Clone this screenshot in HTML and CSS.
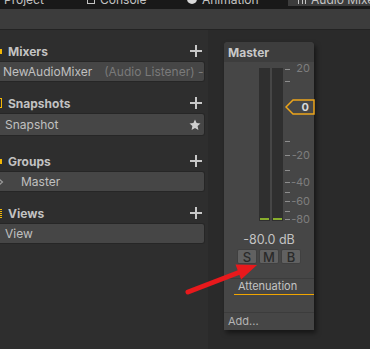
FILE: index.html
```html
<!DOCTYPE html>
<html lang="en">
<head>
    <meta charset="utf-8">
    <title>Audio Mixer</title>
    <link rel="stylesheet" href="styles.css">
</head>
<body>
    <div class="tabs">
        <div class="tab tab-first"><span class="tab-icon folder"></span>Project</div>
        <div class="tab tab-console"><span class="tab-icon box"></span>Console</div>
        <div class="tab tab-anim"><span class="tab-icon dot"></span>Animation</div>
        <div class="tab active"><span class="tab-icon bars-icon"></span>Audio Mixer</div>
    </div>
    <div class="toolbar"></div>

    <div class="main">
        <div class="sidebar">
            <div class="section">
                <div class="section-head">
                    <span class="marker marker-dot"></span>
                    <span class="title">Mixers</span>
                    <svg class="plus" viewBox="0 0 12 12"><path d="M6 0v12M0 6h12"/></svg>
                </div>
                <div class="row row-mixer">NewAudioMixer<span class="muted">(Audio Listener) -</span></div>
            </div>
            <div class="section section-snap">
                <div class="section-head">
                    <span class="marker marker-bracket"></span>
                    <span class="title">Snapshots</span>
                    <svg class="plus" viewBox="0 0 12 12"><path d="M6 0v12M0 6h12"/></svg>
                </div>
                <div class="row row-snap">Snapshot
                    <svg class="star" viewBox="0 0 12 12"><path d="M6 0.5l1.6 3.6 3.9 0.4-2.9 2.6 0.8 3.9L6 9 2.6 11l0.8-3.9L0.5 4.5l3.9-0.4z"/></svg>
                </div>
            </div>
            <div class="section">
                <div class="section-head">
                    <span class="marker marker-dot"></span>
                    <span class="title">Groups</span>
                    <svg class="plus" viewBox="0 0 12 12"><path d="M6 0v12M0 6h12"/></svg>
                </div>
                <div class="row row-group">
                    <svg class="chevron" viewBox="0 0 8 8"><path d="M2 1l3.5 3L2 7"/></svg>
                    <span>Master</span>
                </div>
            </div>
            <div class="section">
                <div class="section-head">
                    <span class="marker marker-dash"></span>
                    <span class="title">Views</span>
                    <svg class="plus" viewBox="0 0 12 12"><path d="M6 0v12M0 6h12"/></svg>
                </div>
                <div class="row row-view">View</div>
            </div>
        </div>

        <div class="mixer-area">
            <div class="strip">
                <div class="strip-head">Master</div>
                <div class="meter">
                    <div class="bar"><div class="level"></div></div>
                    <div class="bar"><div class="level"></div></div>
                    <div class="scale">
                        <span class="tick" style="top: 1px"></span>
                        <span class="tick" style="top: 13px"></span>
                        <span class="tick" style="top: 73px"></span>
                        <span class="tick" style="top: 87px"></span>
                        <span class="tick" style="top: 102px"></span>
                        <span class="tick" style="top: 114px"></span>
                        <span class="tick" style="top: 124px"></span>
                        <span class="tick" style="top: 133px"></span>
                        <span class="tick" style="top: 143px"></span>
                        <span class="tick" style="top: 151px"></span>
                        <span class="label" style="top: 0px">20</span>
                        <span class="label" style="top: 87px">-20</span>
                        <span class="label" style="top: 114px">-40</span>
                        <span class="label" style="top: 133px">-60</span>
                        <span class="label" style="top: 151px">-80</span>
                        <div class="pointer">
                            <svg viewBox="0 0 30 16"><path d="M1 8L8 1H29V15H8Z"/></svg>
                            <span>0</span>
                        </div>
                    </div>
                </div>
                <div class="db">-80.0 dB</div>
                <div class="buttons">
                    <div class="btn-sm">S</div>
                    <div class="btn-sm">M</div>
                    <div class="btn-sm">B</div>
                </div>
                <div class="effects">
                    <div class="effect">Attenuation</div>
                </div>
                <div class="spacer"></div>
                <div class="add">Add...</div>
            </div>
        </div>
    </div>

    <svg class="arrow" viewBox="0 0 370 349">
        <path class="arrow-line" d="M188 292L240 272"/>
        <path class="arrow-head" d="M257 265L235.5 264.6L241.1 279.6Z"/>
    </svg>
</body>
</html>
```

FILE: styles.css
```css
body {
    margin: 0;
    width: 370px;
    height: 349px;
    overflow: hidden;
    background-color: #2a2a2a;
    font-family: Inter, "Noto Sans", sans-serif;
    color: #c4c4c4;
    position: relative;
}

/* window tabs, mostly cut off at the top */
.tabs {
    height: 9px;
    background-color: #191919;
    display: flex;
    overflow: hidden;
}
.tab {
    flex: none;
    display: flex;
    align-items: center;
    gap: 5px;
    padding-left: 10px;
    height: 14px;
    margin-top: -8px;
    font-size: 12px;
    white-space: nowrap;
    box-sizing: border-box;
}
.tab-first {
    width: 96px;
    margin-left: -19px;
}
.tab-console {
    width: 100px;
}
.tab-anim {
    width: 111px;
}
.tab.active {
    flex: 1;
    background-color: #3c3c3c;
}
.tab-icon {
    width: 8px;
    height: 9px;
    flex: none;
    box-sizing: border-box;
}
.folder {
    background-color: #c4c4c4;
}
.box {
    border: 1.5px solid #c4c4c4;
}
.dot {
    border-radius: 50%;
    background-color: #d8d8d8;
    width: 10px;
    height: 10px;
}
.bars-icon {
    border-left: 1px solid #c4c4c4;
    border-right: 1px solid #c4c4c4;
    background: linear-gradient(#c4c4c4, #c4c4c4) center / 1px 100% no-repeat;
}

.toolbar {
    height: 20px;
    background-color: #3c3c3c;
    border-bottom: 1px solid #232323;
}

.main {
    display: flex;
    height: 319px;
}

/* left column */
.sidebar {
    width: 208px;
    padding: 11px 3px 0 0;
    box-sizing: border-box;
    background-color: #2e2e2e;
}
.section {
    margin-bottom: 11px;
}
.section-snap {
    margin-bottom: 15px;
}
.section-head {
    height: 20px;
    display: flex;
    align-items: center;
}
.marker {
    width: 2px;
    flex: none;
    box-sizing: border-box;
}
.marker-dot {
    height: 5px;
    background-color: #f2b705;
}
.marker-bracket {
    height: 10px;
    border: 1.5px solid #f2b705;
    border-left: none;
}
.marker-dash {
    height: 9px;
    background: repeating-linear-gradient(#f2b705 0 1px, transparent 1px 2px);
}
.title {
    margin-left: 6px;
    font-size: 12px;
    font-weight: bold;
    color: #c2c2c2;
}
.plus {
    margin-left: auto;
    margin-right: 3px;
    width: 12px;
    height: 12px;
    stroke: #c8c8c8;
    stroke-width: 2;
}
.row {
    height: 21px;
    box-sizing: border-box;
    display: flex;
    align-items: center;
    background-color: #464646;
    border: 1px solid #262626;
    border-left: none;
    border-radius: 0 3px 3px 0;
    font-size: 12px;
    color: #c0c0c0;
    white-space: nowrap;
    overflow: hidden;
}
.row-mixer {
    padding-left: 3px;
}
.muted {
    margin-left: 12px;
    color: #7a7a7a;
}
.row-snap {
    height: 23px;
    padding-left: 5px;
}
.star {
    margin-left: auto;
    margin-right: 3px;
    width: 12px;
    height: 12px;
    fill: #cfcfcf;
}
.row-group span {
    margin-left: 16px;
}
.chevron {
    width: 8px;
    height: 8px;
    margin-left: -3px;
    fill: none;
    stroke: #9a9a9a;
    stroke-width: 1.2;
}
.row-view {
    padding-left: 5px;
}

/* mixer strips */
.mixer-area {
    flex: 1;
    padding: 12px 0 0 16px;
}
.strip {
    width: 90px;
    height: 288px;
    background-color: #464646;
    border-radius: 4px 4px 0 0;
    box-shadow: 2px 3px 5px rgba(0, 0, 0, 0.5);
    display: flex;
    flex-direction: column;
}
.strip-head {
    height: 20px;
    flex: none;
    display: flex;
    align-items: center;
    padding-left: 4px;
    background-color: #3d3d3d;
    border-radius: 4px 4px 0 0;
    font-size: 12px;
    font-weight: bold;
    color: #c8c8c8;
}
.meter {
    display: flex;
    height: 153px;
    margin-top: 6px;
    padding-left: 35px;
}
.bar {
    width: 11px;
    background-color: #2f2f2f;
    display: flex;
    flex-direction: column;
    justify-content: flex-end;
    padding: 0 1px 1px;
    box-sizing: border-box;
}
.bar + .bar {
    margin-left: 2px;
}
.level {
    height: 2px;
    background-color: #88ad2c;
}
.scale {
    position: relative;
    flex: 1;
    margin-left: 2px;
}
.tick {
    position: absolute;
    left: 0;
    width: 5px;
    height: 1px;
    background-color: #8e8e8e;
}
.label {
    position: absolute;
    right: 4px;
    transform: translateY(-50%);
    font-size: 11px;
    color: #7e7e7e;
}
.pointer {
    position: absolute;
    left: 0;
    top: 31px;
    width: 30px;
    height: 16px;
}
.pointer svg {
    width: 30px;
    height: 16px;
    fill: none;
    stroke: #eda51b;
    stroke-width: 1.5;
}
.pointer span {
    position: absolute;
    right: 6px;
    top: 1px;
    font-size: 11px;
    font-weight: bold;
    color: #dadada;
}
.db {
    margin-top: 11px;
    text-align: center;
    font-size: 12.5px;
    line-height: 16px;
    color: #c4c4c4;
}
.buttons {
    display: flex;
    justify-content: center;
    gap: 2px;
    margin-top: 1px;
}
.btn-sm {
    width: 20px;
    height: 15px;
    box-sizing: border-box;
    display: flex;
    align-items: center;
    justify-content: center;
    background-color: #616161;
    border: 1px solid #404040;
    border-radius: 2px;
    font-size: 13px;
    font-weight: 500;
    color: #2a2a2a;
}
.effects {
    margin-top: 14px;
    border-top: 1px solid #3c3c3c;
}
.effect {
    height: 15px;
    margin-left: 10px;
    padding-left: 4px;
    border-bottom: 1.5px solid #f0a500;
    font-size: 11px;
    line-height: 15px;
    color: #c4c4c4;
}
.spacer {
    flex: 1;
}
.add {
    height: 17px;
    border-top: 1px solid #3c3c3c;
    padding-left: 4px;
    font-size: 11px;
    line-height: 17px;
    color: #b4b4b4;
}

/* red annotation arrow drawn over the page */
.arrow {
    position: absolute;
    left: 0;
    top: 0;
    width: 370px;
    height: 349px;
    pointer-events: none;
}
.arrow-line {
    stroke: #e8191c;
    stroke-width: 5;
    stroke-linecap: round;
}
.arrow-head {
    fill: #e8191c;
}
```
